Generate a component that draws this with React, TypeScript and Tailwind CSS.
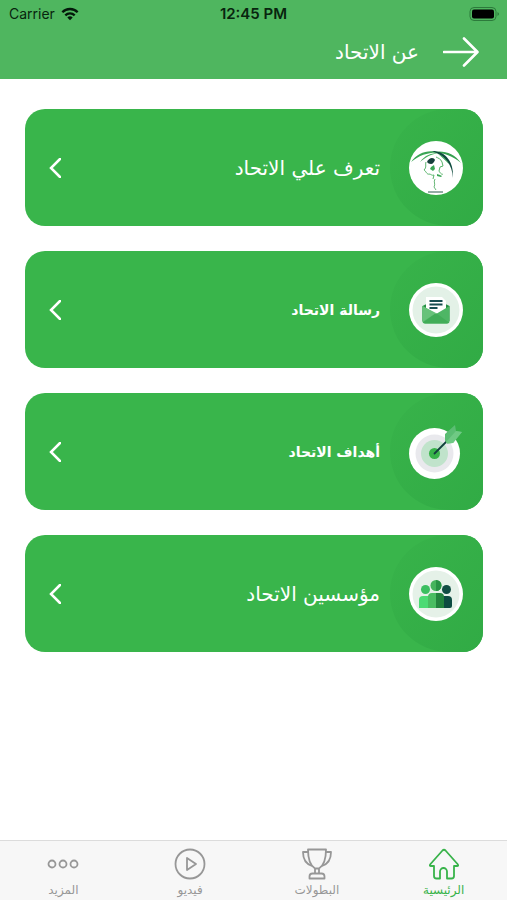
import type { ReactNode } from 'react';

const GREEN = '#38b34a';

function FederationLogo() {
  return (
    <svg viewBox="0 0 54 54" className="size-[54px]" fill="none" aria-hidden="true">
      <circle cx="27" cy="27" r="27" fill="#fff" />
      <path d="M2 21C9 11 20 8 32 12c-11-1-20 1-30 9Z" fill="#3aa655" />
      <path d="M11 21c5-7 11-9 19-9-8 1-13 4-19 9Z" fill="#45ad5c" />
      <path d="M24 11c11-2 21 1 28 11-8-7-17-10-28-11Z" fill="#35a04f" />
      <path d="M23 10c13 0 22 10 21 27-1-14-8-22-21-27Z" fill="#0f4c3f" />
      <path d="M29 13c5 2 9 6 11 10-4-4-7-7-11-10Z" fill="#3aa655" />
      <path d="M18 21c2-5 7-5 8-2-1 2-2 4-4 4s-3-1-4-2Z" fill="#153f3b" />
      <path
        d="M17 21c-1 3 1 5-2 8 2 1 3 5 5 4 2 0 3 2 5 1m2-18c2 1 5 2 6 5l1 4-3 1-1 4c1 2 3 4 4 3m-9 1-1 4"
        stroke="#58b56b"
        strokeWidth="1"
      />
      <path d="m22 26 3-2 1 4-2 2-3-2Zm6 7 3 1 2 1-1 1-4-1Z" fill="#3aa655" />
      <path d="M26 38c-2 3 1 5-1 8l2 3" stroke="#69b878" />
      <path d="M19 51h15" stroke="#285b4d" />
    </svg>
  );
}

function MessageIcon() {
  return (
    <svg viewBox="0 0 54 54" className="size-[54px]" aria-hidden="true">
      <circle cx="27" cy="27" r="27" fill="#fff" />
      <circle cx="27" cy="27" r="23.500" fill="#e3f1e7" />
      <path d="M13.500 23l4-2h19l4 2v15h-27Z" fill="#258f43" />
      <path d="M17 14h16l4 4v9l-10 6-10-6Z" fill="#fff" />
      <path d="M20.500 18h13M20.500 21.500h13M20.500 25h8" stroke="#164c50" strokeWidth="1.800" />
      <path d="M13.500 23 27 31l13.500-8v15.500a2 2 0 0 1-2 2h-23a2 2 0 0 1-2-2Z" fill="#4eb665" />
      <path d="M14 39.500 27 30l13 9.500-2 1H16Z" fill="#41ad58" />
      <path d="M13.500 23 27 30l-13.500 9Z" fill="#67c27a" />
    </svg>
  );
}

function TargetIcon() {
  return (
    <svg viewBox="0 0 54 54" className="size-[54px]" aria-hidden="true">
      <circle cx="25.500" cy="28.500" r="25.500" fill="#fff" />
      <circle cx="25.500" cy="28.500" r="19" fill="#e9e9ed" />
      <circle cx="25.500" cy="28.500" r="13.500" fill="#c0e3cb" />
      <circle cx="25.500" cy="28.500" r="5.500" fill="#38b34a" />
      <path d="M25.500 28.500 39 15" stroke="#123f3d" strokeWidth="1.800" strokeLinecap="round" />
      <path d="M36 9 46 0l1 6 6 1-9 11-6 .5-2-3Z" fill="#5bbd73" />
      <path d="m37 17 10-11 6 1-9 11-6 .5Z" fill="#6fc984" />
    </svg>
  );
}

function FoundersIcon() {
  return (
    <svg viewBox="0 0 54 54" className="size-[54px]" aria-hidden="true">
      <circle cx="27" cy="27" r="27" fill="#fff" />
      <circle cx="27" cy="27" r="23.500" fill="#e5f1e8" />
      <circle cx="16.500" cy="22.500" r="4.500" fill="#3bbf60" />
      <path d="M10 41V33a4 4 0 0 1 4-4h6v12Z" fill="#4cdb74" />
      <circle cx="37.500" cy="22.500" r="4.500" fill="#114d43" />
      <path d="M34 29h5a4 4 0 0 1 4 4v6a2 2 0 0 1-2 2h-7Z" fill="#0e4c42" />
      <circle cx="27" cy="18.500" r="5.500" fill="#45b45c" />
      <path d="M27 13a5.500 5.500 0 0 1 0 11Z" fill="#289345" />
      <path d="M19 41V30a4 4 0 0 1 4-4h4v15Z" fill="#4abd62" />
      <path d="M27 26h4a4 4 0 0 1 4 4v11h-8Z" fill="#23843e" />
    </svg>
  );
}

interface Item {
  title: string;
  bold?: boolean;
  icon: ReactNode;
}

const items: Item[] = [
  { title: 'تعرف علي الاتحاد', icon: <FederationLogo /> },
  { title: 'رسالة الاتحاد', bold: true, icon: <MessageIcon /> },
  { title: 'أهداف الاتحاد', bold: true, icon: <TargetIcon /> },
  { title: 'مؤسسين الاتحاد', icon: <FoundersIcon /> },
];

const tabs = [
  {
    label: 'الرئيسية',
    active: true,
    icon: <path d="M6 18v10q0 2.500 2.500 2.500H12v-7a3.500 3.500 0 0 1 7 0v7h4.500q2.500 0 2.500-2.500V18h3q2 0 .5-2L17.500 2.500q-1.500-1.500-3 0L2.500 16q-1.500 2 .5 2Z" />,
  },
  {
    label: 'البطولات',
    icon: (
      <>
        <path d="M7 1.500h18c0 11-2 16-7 19h-4c-5-3-7-8-7-19ZM14 20.500v5m4-5v5M8.500 30.500v-2q0-3 3-3h9q3 0 3 3v2Z" />
        <path d="M7.500 4H2c0 7 3 12 9 14M24.500 4H30c0 7-3 12-9 14" />
      </>
    ),
  },
  {
    label: 'فيديو',
    icon: (
      <>
        <circle cx="16" cy="16" r="14.500" />
        <path d="m13 10 9 6-9 6Z" />
      </>
    ),
  },
  {
    label: 'المزيد',
    icon: (
      <>
        <circle cx="5" cy="16" r="3.500" />
        <circle cx="16" cy="16" r="3.500" />
        <circle cx="27" cy="16" r="3.500" />
      </>
    ),
  },
];

function StatusBar() {
  return (
    <div
      dir="ltr"
      className="grid h-7 grid-cols-3 items-center px-2 font-['Inter','Liberation_Sans',sans-serif] text-sm text-[#08240e]"
    >
      <div className="flex items-center gap-1.5 pl-px">
        <span>Carrier</span>
        <svg viewBox="0 0 20 15" className="h-3.5 w-[18px]" fill="none" stroke="#03180a" strokeWidth="2.600" aria-hidden="true">
          <path d="M1.500 5.500C6 .8 14 .8 18.500 5.500M4.800 9c3-3 7.400-3 10.400 0" />
          <path d="M10 14.500 7 11.300c1.800-1.600 4.200-1.600 6 0Z" fill="#03180a" stroke="none" />
        </svg>
      </div>
      <span className="text-center text-[15px] font-semibold">12:45 PM</span>
      <svg viewBox="0 0 30 14" className="h-3.5 w-[30px] justify-self-end" aria-hidden="true">
        <rect x="1" y="0.500" width="26" height="13" rx="4" fill="none" stroke="#2c7a3b" />
        <rect x="3" y="2.500" width="22" height="9" rx="2" fill="#000" />
        <path d="M28.500 5q3 2 0 4Z" fill="#2c7a3b" />
      </svg>
    </div>
  );
}

function ItemCard({ title, bold, icon }: Item) {
  return (
    <button
      type="button"
      className="flex h-[117px] w-full items-center overflow-hidden rounded-[20px] bg-[#39b54b] text-white"
    >
      <span className="flex h-full w-[93px] shrink-0 items-center rounded-l-full bg-linear-to-br from-[#38b34a] to-[#31ab45] pr-5">
        {icon}
      </span>
      <span className={bold ? 'grow pr-2.5 text-right text-sm font-bold' : 'grow pr-2.5 text-right text-xl'}>
        {title}
      </span>
      <svg viewBox="0 0 12 20" className="ml-6 h-5 w-3" fill="none" stroke="currentColor" strokeWidth="2.500" aria-hidden="true">
        <path d="M11 1 2 10l9 9" strokeLinecap="round" />
      </svg>
    </button>
  );
}

export default function App() {
  return (
    <div dir="rtl" className="flex min-h-screen flex-col bg-white font-['DejaVu_Sans',sans-serif]">
      <header className="bg-[#4fb65f] pb-2">
        <StatusBar />
        <div className="flex h-[43px] items-center gap-6 pt-1 pr-7 text-white">
          <button type="button" aria-label="رجوع">
            <svg viewBox="0 0 36 30" className="h-[30px] w-9" fill="none" stroke="currentColor" strokeWidth="2.600" aria-hidden="true">
              <path d="M1 15h33M21 1.500 34.500 15 21 28.500" strokeLinecap="round" strokeLinejoin="round" />
            </svg>
          </button>
          <h1 className="text-xl">عن الاتحاد</h1>
        </div>
      </header>

      <main className="flex grow flex-col gap-[25px] pt-[30px] pr-6 pb-6 pl-[25px]">
        {items.map((item) => (
          <ItemCard key={item.title} {...item} />
        ))}
      </main>

      <nav className="grid h-[60px] grid-cols-4 border-t border-[#dcdcdc] bg-[#f7f7f7]">
        {tabs.map((tab) => (
          <a
            key={tab.label}
            href="#"
            aria-current={tab.active ? 'page' : undefined}
            className={`flex flex-col items-center gap-0.5 pt-[7px] text-xs ${tab.active ? 'text-[#38b34a]' : 'text-[#979797]'}`}
          >
            <svg
              viewBox="0 0 32 32"
              className="size-8 shrink-0"
              fill="none"
              stroke={tab.active ? GREEN : 'currentColor'}
              strokeWidth="1.800"
              strokeLinejoin="round"
              aria-hidden="true"
            >
              {tab.icon}
            </svg>
            <span>{tab.label}</span>
          </a>
        ))}
      </nav>
    </div>
  );
}
